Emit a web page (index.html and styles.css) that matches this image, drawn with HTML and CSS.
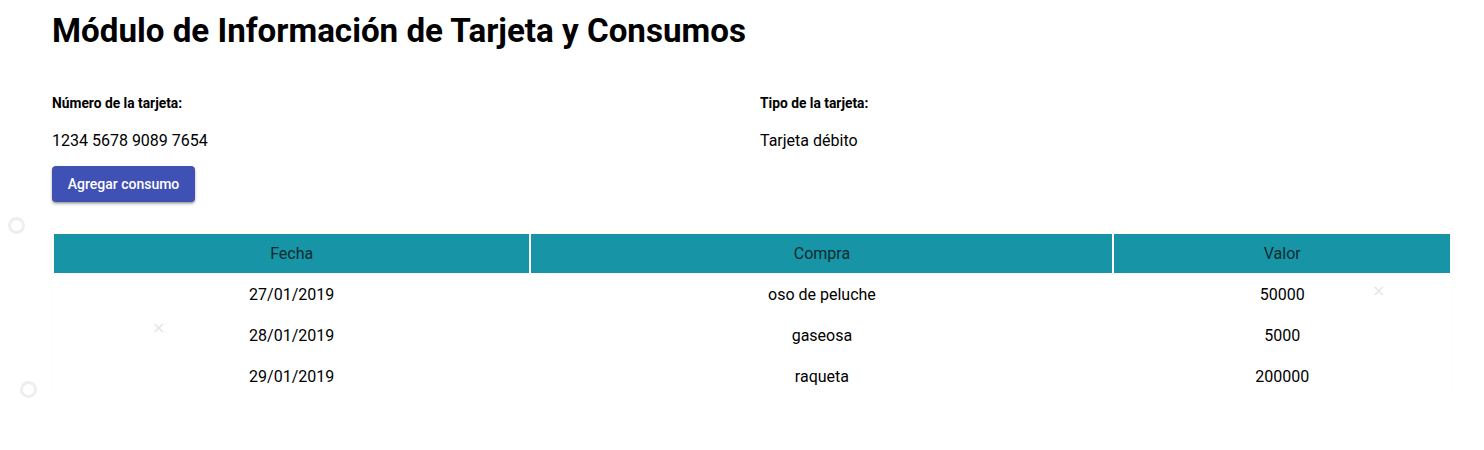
FILE: index.html
```html
<!DOCTYPE html>
<html lang="es">
<head>
<meta charset="utf-8">
<title>Módulo de Información de Tarjeta y Consumos</title>
<link rel="stylesheet" href="styles.css">
</head>
<body>
<div class="deco">
  <span class="ring ring-a"></span>
  <span class="ring ring-b"></span>
  <span class="cross cross-a">×</span>
  <span class="cross cross-b">×</span>
</div>
<main class="page">
  <h1 class="title">Módulo de Información de Tarjeta y Consumos</h1>
  <section class="info">
    <div class="field">
      <div class="label">Número de la tarjeta:</div>
      <div class="value">1234 5678 9089 7654</div>
    </div>
    <div class="field">
      <div class="label">Tipo de la tarjeta:</div>
      <div class="value">Tarjeta débito</div>
    </div>
  </section>
  <button class="btn">Agregar consumo</button>
  <div class="card">
    <table class="grid">
      <thead>
        <tr><th class="c1">Fecha</th><th class="c2">Compra</th><th class="c3">Valor</th></tr>
      </thead>
      <tbody>
        <tr><td>27/01/2019</td><td>oso de peluche</td><td>50000</td></tr>
        <tr><td>28/01/2019</td><td>gaseosa</td><td>5000</td></tr>
        <tr><td>29/01/2019</td><td>raqueta</td><td>200000</td></tr>
      </tbody>
    </table>
  </div>
</main>
</body>
</html>
```
FILE: styles.css
```css
html, body {
  margin: 0;
  padding: 0;
  background: #fff;
}
body {
  font-family: Roboto, "Liberation Sans", sans-serif;
  color: #000;
  position: relative;
  min-height: 450px;
}
.page {
  padding: 12px 32px 0 52px;
}
.title {
  margin: 0;
  font-size: 33.15px;
  font-weight: 700;
  line-height: 38px;
  letter-spacing: 0;
}
.info {
  display: grid;
  grid-template-columns: 708px 1fr;
  margin-top: 45px;
}
.label {
  font-size: 13.8px;
  font-weight: 700;
  line-height: 16px;
}
.value {
  font-size: 16px;
  line-height: 20px;
  margin-top: 20px;
}
.btn {
  display: block;
  margin-top: 15px;
  width: 143px;
  height: 36px;
  border: none;
  border-radius: 4px;
  background: #3f51b5;
  color: #fff;
  font-family: Roboto, "Liberation Sans", sans-serif;
  font-size: 14px;
  font-weight: 500;
  box-shadow: 0 2px 3px rgba(0,0,0,0.3), 0 1px 1px rgba(0,0,0,0.14);
  padding: 0;
}
.card {
  margin-top: 30px;
  width: 1400px;
  box-shadow: 0 0 1px rgba(0,0,0,0.06);
}
.grid {
  width: 100%;
  border-spacing: 2px;
  font-size: 16px;
}
.grid th {
  background: #1794a5;
  color: #0d2b2f;
  font-weight: 400;
  height: 39px;
  padding: 0;
}
.grid td {
  height: 39px;
  text-align: center;
  padding: 0;
}
.c1 { width: 476px; }
.c2 { width: 582px; }
.c3 { width: 336px; }
.deco span {
  position: absolute;
}
.ring {
  width: 11px;
  height: 11px;
  border: 3px solid #eeeeee;
  border-radius: 50%;
}
.ring-a { left: 8px; top: 217px; }
.ring-b { left: 20px; top: 381px; }
.cross {
  color: #e6e6e6;
  font-size: 16px;
  line-height: 16px;
  font-family: "DejaVu Sans", sans-serif;
}
.cross-a { left: 152px; top: 320px; }
.cross-b { left: 1372px; top: 283px; }
```
